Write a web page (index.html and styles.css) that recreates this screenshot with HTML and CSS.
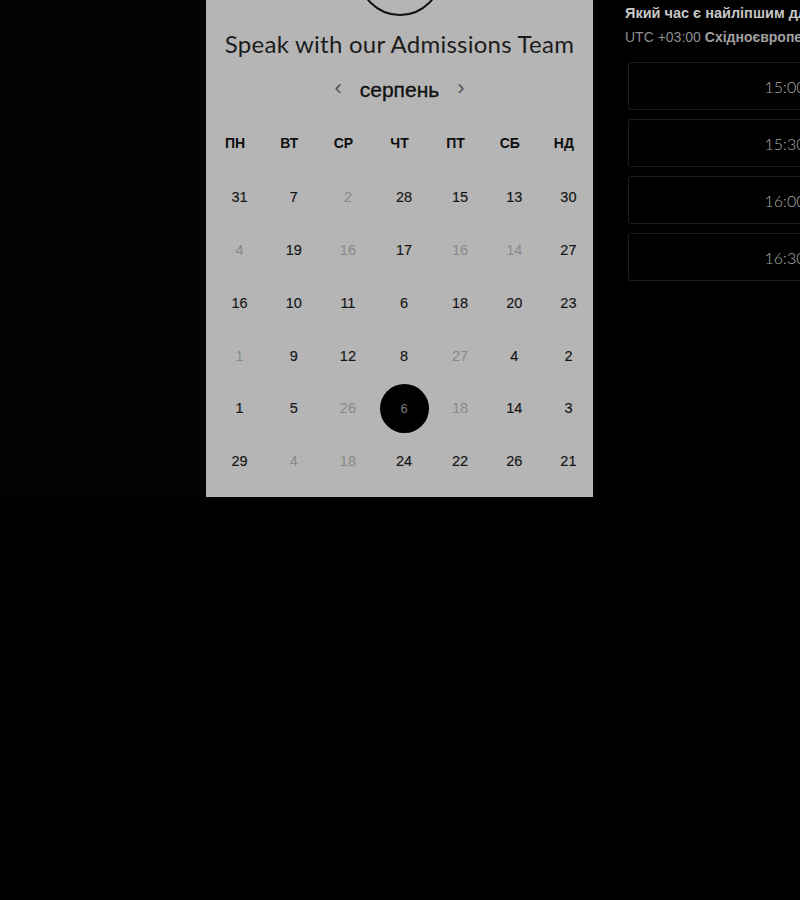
FILE: index.html
```html
<!DOCTYPE html>
<html lang="uk">
<head>
<meta charset="utf-8">
<title>Speak with our Admissions Team</title>
<link rel="stylesheet" href="styles.css">
</head>
<body>
<div class="stage">
  <div class="left-space"></div>
  <section class="panel">
    <div class="avatar"></div>
    <h1 class="title">Speak with our Admissions Team</h1>
    <div class="month-nav">
      <span class="chev">&#8249;</span>
      <span class="month">серпень</span>
      <span class="chev">&#8250;</span>
    </div>
    <div class="grid">
      <div class="wd">ПН</div><div class="wd">ВТ</div><div class="wd">СР</div><div class="wd">ЧТ</div><div class="wd">ПТ</div><div class="wd">СБ</div><div class="wd">НД</div>

      <div class="day">31</div><div class="day">7</div><div class="day muted">2</div><div class="day">28</div><div class="day">15</div><div class="day">13</div><div class="day">30</div>

      <div class="day muted">4</div><div class="day">19</div><div class="day muted">16</div><div class="day">17</div><div class="day muted">16</div><div class="day muted">14</div><div class="day">27</div>

      <div class="day">16</div><div class="day">10</div><div class="day">11</div><div class="day">6</div><div class="day">18</div><div class="day">20</div><div class="day">23</div>

      <div class="day muted">1</div><div class="day">9</div><div class="day">12</div><div class="day">8</div><div class="day muted">27</div><div class="day">4</div><div class="day">2</div>

      <div class="day">1</div><div class="day">5</div><div class="day muted">26</div><div class="day selected"><span class="dot">6</span></div><div class="day muted">18</div><div class="day">14</div><div class="day">3</div>

      <div class="day">29</div><div class="day muted">4</div><div class="day muted">18</div><div class="day">24</div><div class="day">22</div><div class="day">26</div><div class="day">21</div>
    </div>
  </section>
  <aside class="times">
    <h2 class="q">Який час є найліпшим для вас?</h2>
    <p class="tz">UTC +03:00 <b>Східноєвропейський час</b></p>
    <div class="slots">
      <div class="slot">15:00</div>
      <div class="slot">15:30</div>
      <div class="slot">16:00</div>
      <div class="slot">16:30</div>
    </div>
  </aside>
</div>
</body>
</html>
```
FILE: styles.css
```css
html, body {
  margin: 0;
  padding: 0;
  background: #010101;
  font-family: "Liberation Sans", Arial, sans-serif;
  width: 800px;
  height: 900px;
  overflow: hidden;
}

.stage {
  display: flex;
  height: 497px;
  overflow: hidden;
  background: #040404;
}

.left-space {
  width: 206px;
  flex: none;
}

.panel {
  width: 387px;
  flex: none;
  background: #b5b5b5;
  display: flex;
  flex-direction: column;
  align-items: center;
  overflow: hidden;
}

.avatar {
  width: 80px;
  height: 80px;
  border: 2.5px solid #111;
  border-radius: 50%;
  margin-top: -68px;
  flex: none;
}

.title {
  margin: 13px 0 0;
  font-family: Lato, "Open Sans", sans-serif;
  font-weight: 400;
  font-size: 24px;
  line-height: 30px;
  color: #1c1c1c;
  letter-spacing: 0.25px;
  white-space: nowrap;
}

.month-nav {
  display: flex;
  align-items: center;
  gap: 18px;
  height: 30px;
  margin-top: 16px;
}

.chev {
  font-size: 22px;
  color: #555;
  line-height: 30px;
  margin-top: -4px;
}

.month {
  font-size: 21px;
  color: #111;
  line-height: 30px;
  -webkit-text-stroke: 0.35px #111;
}

.grid {
  align-self: stretch;
  display: grid;
  grid-template-columns: repeat(7, 1fr);
  grid-auto-rows: 52.8px;
  padding: 0 2px;
  margin-top: 12px;
}

.wd {
  display: flex;
  align-items: center;
  justify-content: center;
  font-weight: 700;
  font-size: 14px;
  color: #0e0e0e;
}

.day {
  display: flex;
  align-items: center;
  justify-content: center;
  padding-left: 9px;
  padding-top: 2px;
  font-size: 14.5px;
  color: #141414;
  -webkit-text-stroke: 0.15px #141414;
}

.day.muted {
  color: #898989;
  -webkit-text-stroke: 0;
}

.dot {
  width: 49px;
  height: 49px;
  border-radius: 50%;
  background: #000;
  color: #7a7a7a;
  font-size: 13px;
  -webkit-text-stroke: 0;
  display: flex;
  align-items: center;
  justify-content: center;
  flex: none;
}

.times {
  flex: 1;
  min-width: 0;
  background: #000;
  padding-left: 32px;
  overflow: hidden;
}

.q {
  margin: 4px 0 0;
  font-size: 14.5px;
  font-weight: 700;
  line-height: 18px;
  color: #c6c6c6;
  white-space: nowrap;
}

.tz {
  margin: 7px 0 0;
  font-size: 14px;
  line-height: 17px;
  color: #8e8e8e;
  white-space: nowrap;
}

.tz b {
  color: #a0a0a0;
}

.slots {
  margin-top: 16px;
  margin-left: 3px;
  display: flex;
  flex-direction: column;
  gap: 9px;
}

.slot {
  width: 312px;
  height: 46px;
  border: 1px solid #1c1c1c;
  border-radius: 2px;
  display: flex;
  align-items: center;
  justify-content: center;
  font-family: Lato, "Open Sans", sans-serif;
  font-weight: 300;
  font-size: 16px;
  color: #aaaaaa;
  flex: none;
  box-sizing: content-box;
}
```
